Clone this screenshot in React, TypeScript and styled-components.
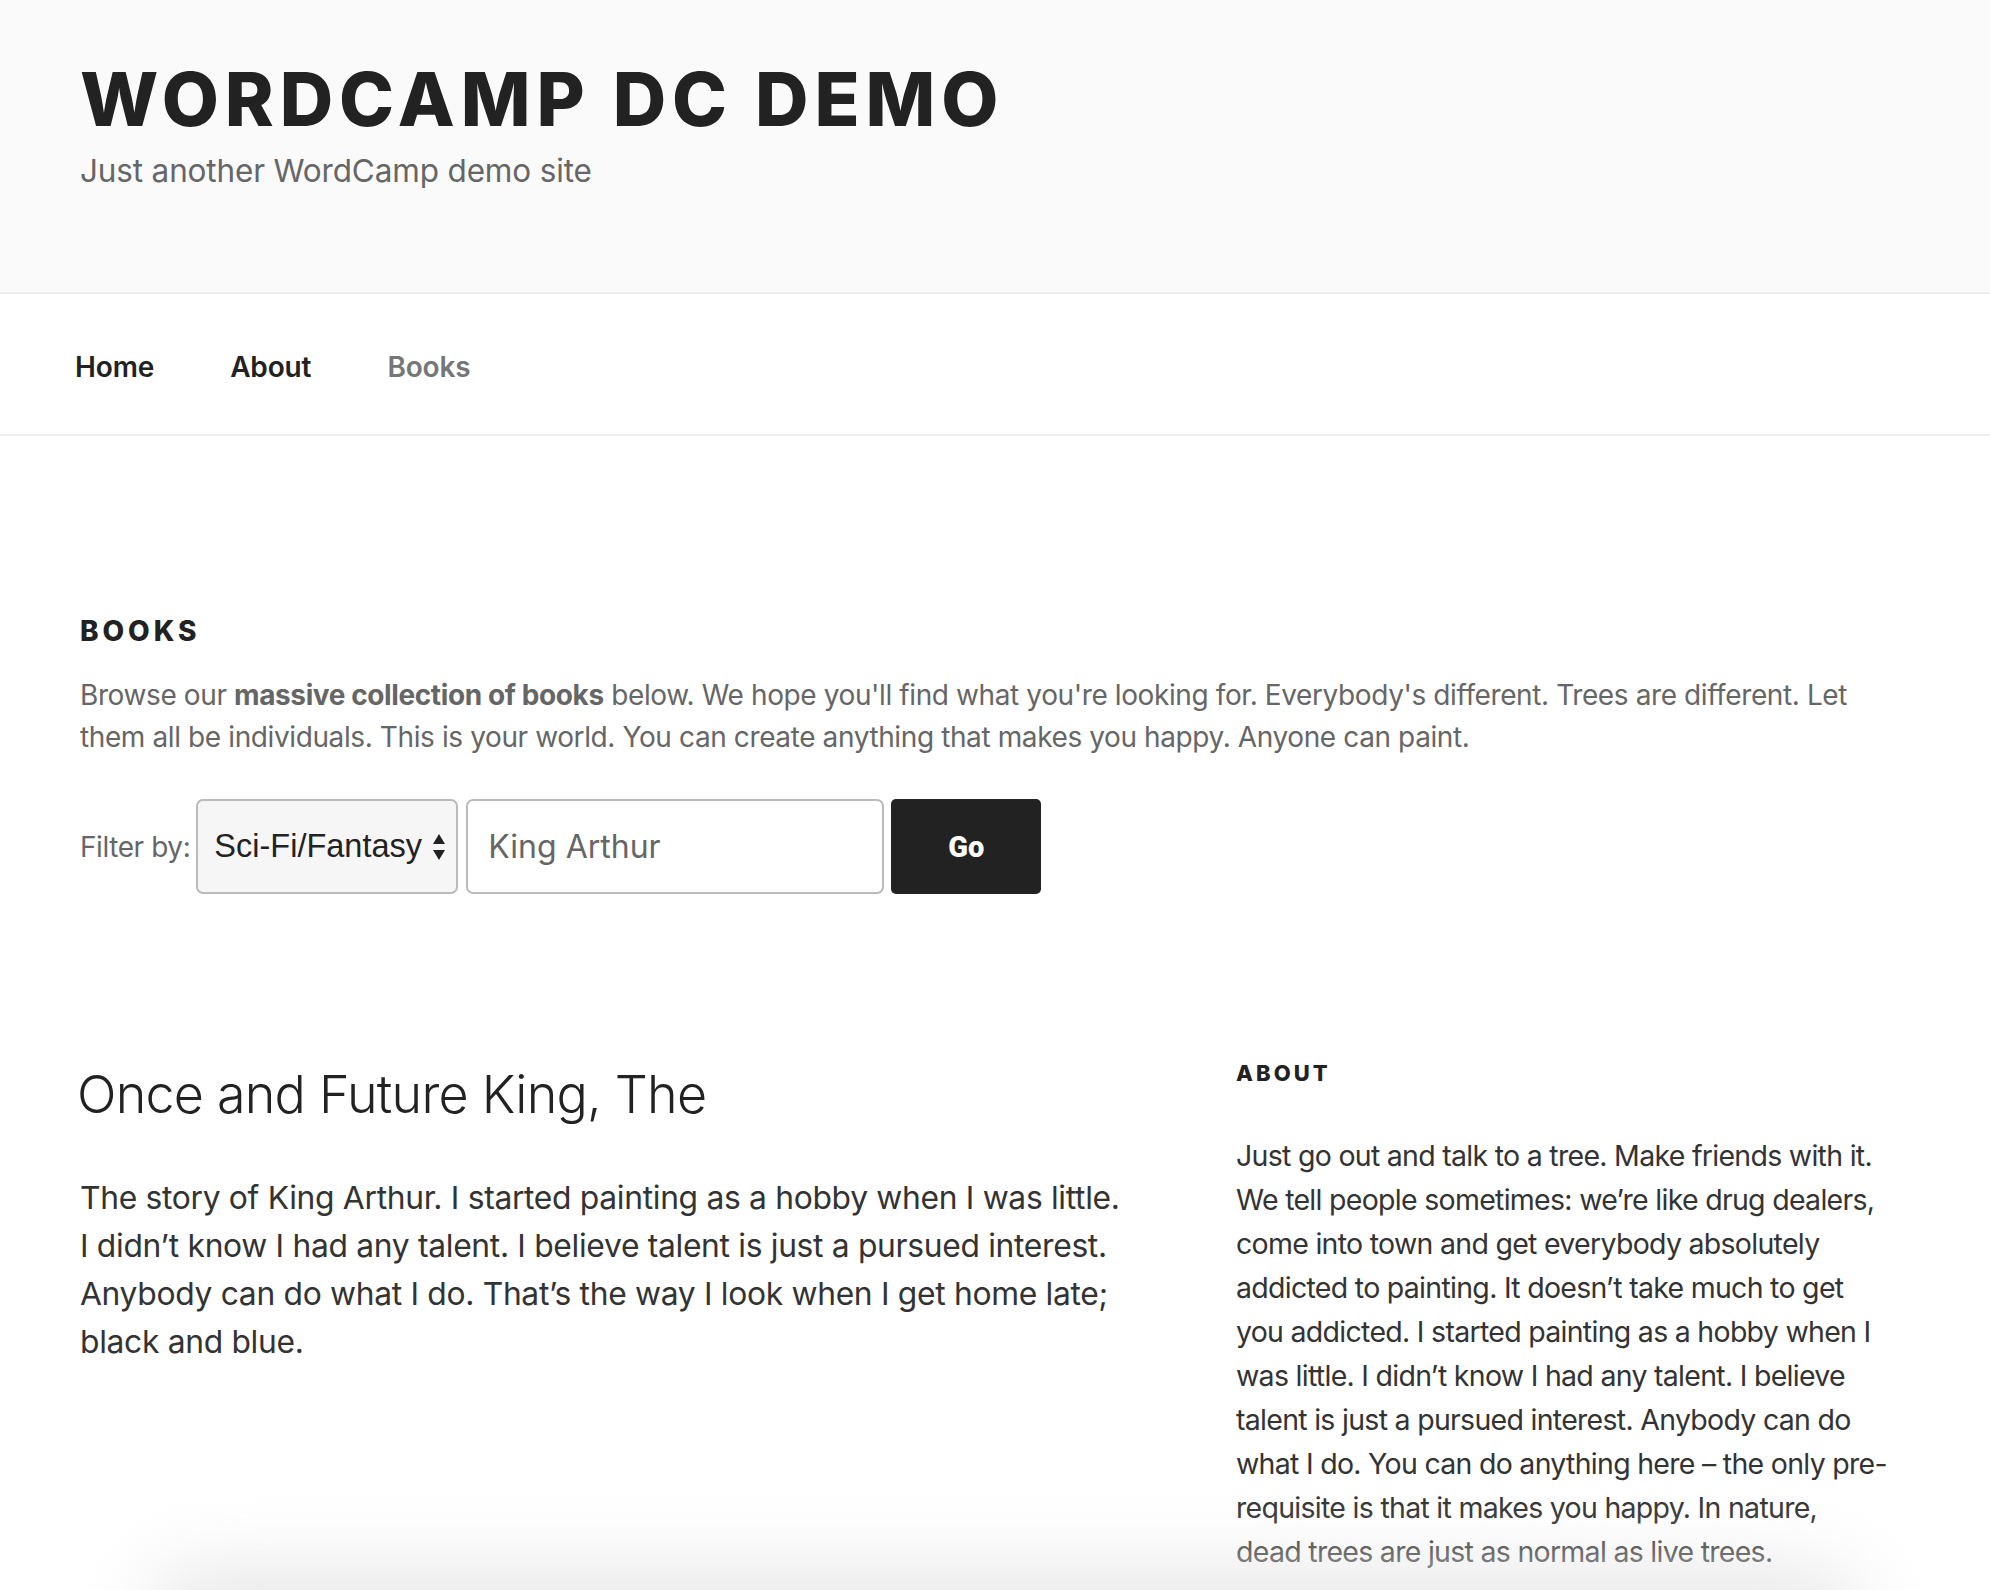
import React from 'react'
import styled, { createGlobalStyle } from 'styled-components'

const GlobalStyle = createGlobalStyle`
  html, body {
    margin: 0;
    padding: 0;
    background: #fff;
  }
  body {
    font-family: Inter, "Noto Sans", "Liberation Sans", sans-serif;
    color: #333;
    -webkit-font-smoothing: antialiased;
  }
  * {
    box-sizing: border-box;
  }
`

const SiteHeader = styled.header`
  background: #fafafa;
  height: 294px;
  border-bottom: 2px solid #eee;
  padding: 62px 0 0 80px;
`

const SiteTitle = styled.h1`
  margin: 0;
  font-size: 74px;
  line-height: 1;
  font-weight: 800;
  letter-spacing: 0.08em;
  text-transform: uppercase;
  color: #222;
`

const Tagline = styled.p`
  margin: 16px 0 0;
  font-size: 31.5px;
  line-height: 1.2;
  color: #666;
  letter-spacing: -0.005em;
`

const NavBar = styled.nav`
  height: 142px;
  border-bottom: 2px solid #eee;
  display: flex;
  align-items: center;
  padding: 5px 0 0 37px;
`

const NavLink = styled.a<{ $current?: boolean }>`
  font-size: 28px;
  font-weight: 600;
  padding: 0 38px;
  color: ${(p) => (p.$current ? '#767676' : '#222')};
  text-decoration: none;
  letter-spacing: -0.005em;
`

const Wrap = styled.main`
  width: 1886px;
  padding: 0 0 0 80px;
`

const Intro = styled.section`
  padding-top: 178px;
`

const SectionHeading = styled.h2<{ $size?: number }>`
  margin: 0;
  font-size: ${(p) => p.$size ?? 28}px;
  line-height: 1.25;
  font-weight: 800;
  letter-spacing: 0.14em;
  text-transform: uppercase;
  color: #222;
`

const IntroText = styled.p`
  margin: 25px 0 0;
  font-size: 28px;
  line-height: 42px;
  color: #666;
  letter-spacing: -0.014em;

  strong {
    font-weight: 700;
  }
`

const FilterRow = styled.form`
  margin-top: 41px;
  display: flex;
  align-items: stretch;
  height: 95px;
`

const FilterLabel = styled.label`
  display: flex;
  align-items: center;
  font-size: 28px;
  color: #666;
  margin-right: 6px;
  letter-spacing: -0.015em;
`

const SelectBox = styled.div`
  width: 262px;
  display: flex;
  align-items: center;
  justify-content: space-between;
  padding: 0 10px 0 16px;
  background: #f6f6f6;
  border: 2px solid #bbb;
  border-radius: 7px;
  font-family: "Liberation Sans", Arial, sans-serif;
  font-size: 32.5px;
  color: #222;
`

const TextField = styled.div`
  width: 418px;
  margin-left: 8px;
  display: flex;
  align-items: center;
  padding-left: 20px;
  background: #fff;
  border: 2px solid #bbb;
  border-radius: 7px;
  font-size: 32px;
  color: #666;
`

const GoButton = styled.button`
  width: 150px;
  margin-left: 7px;
  border: 0;
  border-radius: 5px;
  background: #222;
  color: #fff;
  font-family: Roboto, "Liberation Sans", sans-serif;
  font-weight: 900;
  font-size: 29px;
  padding: 0;
  cursor: pointer;
`

const Columns = styled.div`
  display: grid;
  grid-template-columns: 1047px 658px;
  column-gap: 109px;
  margin-top: 166px;
`

const Primary = styled.article`
  padding-top: 2px;
`

const EntryTitle = styled.h2`
  margin: 0 0 0 -3px;
  font-size: 52px;
  line-height: 65px;
  font-weight: 300;
  color: #222;
  letter-spacing: -0.015em;
`

const EntryText = styled.p`
  margin: 47px 0 0;
  font-size: 31.8px;
  line-height: 48px;
  color: #333;
  letter-spacing: -0.01em;
`

const Sidebar = styled.aside``

const WidgetText = styled.p`
  margin: 46px 0 0;
  font-size: 28.5px;
  line-height: 44px;
  color: #333;
  letter-spacing: -0.025em;
`

const BottomShade = styled.div`
  position: fixed;
  left: 150px;
  right: 130px;
  bottom: -70px;
  height: 90px;
  border-radius: 45px;
  background: #e6e6e6;
  filter: blur(38px);
  pointer-events: none;
`

const SelectArrows = () => (
  <svg width="14" height="30" viewBox="0 0 14 30" aria-hidden="true">
    <path d="M7 2 L13 12 L1 12 Z" fill="#222" />
    <path d="M1 18 L13 18 L7 28 Z" fill="#222" />
  </svg>
)

const App = () => {
  return (
    <>
      <GlobalStyle />
      <SiteHeader>
        <SiteTitle>WordCamp DC Demo</SiteTitle>
        <Tagline>Just another WordCamp demo site</Tagline>
      </SiteHeader>
      <NavBar>
        <NavLink href="#">Home</NavLink>
        <NavLink href="#">About</NavLink>
        <NavLink href="#" $current>
          Books
        </NavLink>
      </NavBar>
      <Wrap>
        <Intro>
          <SectionHeading>Books</SectionHeading>
          <IntroText>
            Browse our <strong>massive collection of books</strong> below. We hope you'll find what
            you're looking for. Everybody's different. Trees are different. Let them all be
            individuals. This is your world. You can create anything that makes you happy. Anyone
            can paint.
          </IntroText>
          <FilterRow onSubmit={(e) => e.preventDefault()}>
            <FilterLabel>Filter by:</FilterLabel>
            <SelectBox>
              <span>Sci-Fi/Fantasy</span>
              <SelectArrows />
            </SelectBox>
            <TextField>King Arthur</TextField>
            <GoButton type="submit">Go</GoButton>
          </FilterRow>
        </Intro>
        <Columns>
          <Primary>
            <EntryTitle>Once and Future King, The</EntryTitle>
            <EntryText>
              The story of King Arthur. I started painting as a hobby when I was little. I didn’t
              know I had any talent. I believe talent is just a pursued interest. Anybody can do
              what I do. That’s the way I look when I get home late; black and blue.
            </EntryText>
          </Primary>
          <Sidebar>
            <SectionHeading $size={22}>About</SectionHeading>
            <WidgetText>
              Just go out and talk to a tree. Make friends with it. We tell people sometimes: we’re
              like drug dealers, come into town and get everybody absolutely addicted to painting.
              It doesn’t take much to get you addicted. I started painting as a hobby when I was
              little. I didn’t know I had any talent. I believe talent is just a pursued interest.
              Anybody can do what I do. You can do anything here – the only pre-requisite is that
              it makes you happy. In nature, dead{'\u00a0'}trees are just as normal as live trees.
            </WidgetText>
          </Sidebar>
        </Columns>
      </Wrap>
      <BottomShade />
    </>
  )
}

export default App
